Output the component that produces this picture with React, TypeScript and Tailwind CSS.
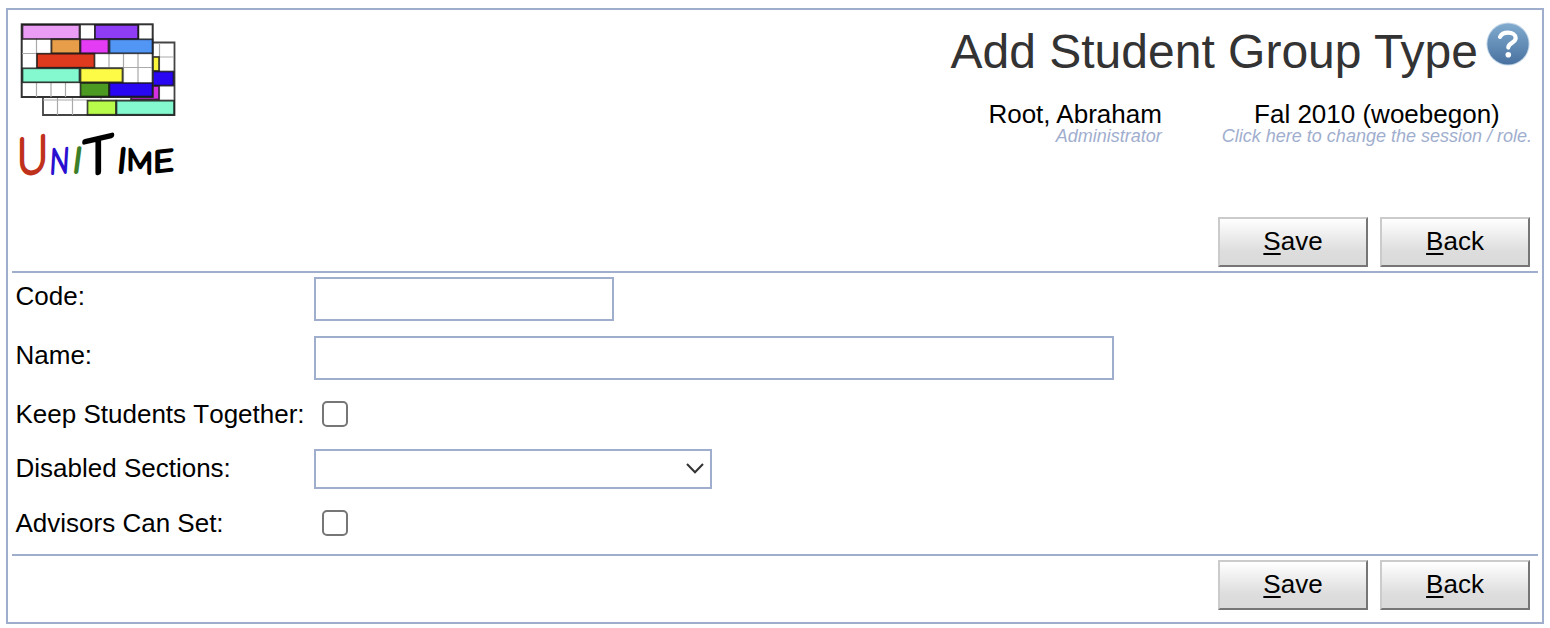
import React from 'react';

type Block = [x: number, y: number, w: number, h: number, fill: string];

const backBlocks: Block[] = [
  [152.5, 57, 6.5, 14, '#fbf53c'],
  [152.5, 71.5, 21, 14, '#2a07f2'],
  [131, 86, 28, 13.5, '#d42fe0'],
  [87.5, 100.7, 28.5, 14, '#b9fb4b'],
  [116.5, 100.7, 57.5, 14, '#84f8cf'],
];

const frontBlocks: Block[] = [
  [22.5, 25, 57, 14, '#eb9df5'],
  [95, 25, 43, 14, '#8f3df5'],
  [51.5, 39.3, 28.5, 14, '#e89e48'],
  [80.5, 39.3, 28, 14, '#e43bf5'],
  [109.5, 39.3, 43, 14, '#5195f5'],
  [37, 53.7, 57.5, 14, '#e03a1e'],
  [22.5, 68.3, 57, 14, '#84f8cf'],
  [80.5, 68.3, 42, 14, '#fdfb46'],
  [80.5, 83, 28.5, 13.5, '#4c9a22'],
  [109.5, 83, 43, 13.5, '#2a07f2'],
];

const letters = [
  { c: 'U', t: 'matrix(0.85 -0.13 0 1 17.2 175)', fill: '#c0311c', size: 50, w: 4.4 },
  { c: 'N', t: 'matrix(0.74 -0.06 -0.06 1 49.5 173.5)', fill: '#2a0fd0', size: 34, w: 3.6 },
  { c: 'I', t: 'matrix(1 0 -0.13 1 72 172)', fill: '#3d7f28', size: 34, w: 3.8 },
  { c: 'T', t: 'matrix(1.02 -0.24 0 1 84 176)', fill: '#000', size: 49, w: 5 },
  { c: 'I', t: 'matrix(1 0 -0.1 1 117 172)', fill: '#000', size: 33, w: 4.2 },
  { c: 'M', t: 'matrix(0.9 0.17 0 0.9 127 169)', fill: '#000', size: 32, w: 4 },
  { c: 'E', t: 'matrix(1.13 -0.13 0 0.95 153.5 172)', fill: '#000', size: 30, w: 3.8 },
];

function Blocks({ items }: { items: Block[] }) {
  return (
    <g stroke="#151515" strokeOpacity="0.8" strokeWidth="1.7">
      {items.map(([x, y, w, h, fill], i) => (
        <rect key={i} x={x} y={y} width={w} height={h} fill={fill} />
      ))}
    </g>
  );
}

function Logo() {
  return (
    <svg className="block h-[190px] w-[170px] shrink-0 overflow-visible" viewBox="12 10 170 190">
      <path d="M152 42.5H174.5V115H43V96H152Z" fill="#fff" stroke="#444" strokeWidth="1.8" />
      <path d="M159.5 43V100M152 57H174M152 86H174M43 100H174M57.5 97V115M72.5 97V115M101 97V101" fill="none" stroke="#aaa" strokeWidth="1.2" />
      <Blocks items={backBlocks} />
      <rect x="21.7" y="24.3" width="131" height="72.7" fill="#fff" stroke="#333" strokeWidth="2" />
      <path
        d="M36.5 39V54M51 39V54M36.5 54V68M22 53.5H51M109 54V68M123.5 54V83M138 54V83M95 67.5H152M36.5 83V97M51 83V97M65.5 83V97M22 82.5H80"
        fill="none"
        stroke="#aaa"
        strokeWidth="1.2"
      />
      <path d="M80 25V39M95 25V39M138.5 25V39" stroke="#333" strokeWidth="1.5" />
      <Blocks items={frontBlocks} />
      <g fontFamily="Lato, sans-serif" fontWeight="100" strokeLinejoin="round">
        {letters.map((l, i) => (
          <text key={i} transform={l.t} fontSize={l.size} fill={l.fill} stroke={l.fill} strokeWidth={l.w}>
            {l.c}
          </text>
        ))}
      </g>
    </svg>
  );
}

function HelpIcon() {
  return (
    <svg className="block size-[44px]" viewBox="0 0 44 44">
      <defs>
        <linearGradient id="help" x1="0" y1="0" x2="0" y2="1">
          <stop offset="0" stopColor="#82abcf" />
          <stop offset="1" stopColor="#4871a0" />
        </linearGradient>
      </defs>
      <circle cx="22" cy="22" r="21.6" fill="#c4d6e7" />
      <circle cx="22" cy="22" r="20.6" fill="url(#help)" />
      <path d="M14 14.8C15.5 11.7 18.5 10.6 22 10.6C26.5 10.6 29.7 12.8 29.7 16C29.7 21 22.3 20.7 22.3 25.6" fill="none" stroke="#fff" strokeWidth="4.2" strokeLinecap="round" />
      <circle cx="22.3" cy="32.8" r="2.8" fill="#fff" />
    </svg>
  );
}

function Button({ label }: { label: string }) {
  return (
    <button className="h-[50px] w-[150px] border-2 border-t-[#cbcbcb] border-r-[#767676] border-b-[#767676] border-l-[#cbcbcb] bg-linear-to-b from-white via-[#dddddd] via-70% to-[#dadada] pb-0.5 text-center text-[26px] leading-[30px]">
      <span className="underline decoration-2 underline-offset-[3px]">{label[0]}</span>
      {label.slice(1)}
    </button>
  );
}

function Buttons() {
  return (
    <div className="flex justify-end gap-3 pr-2">
      <Button label="Save" />
      <Button label="Back" />
    </div>
  );
}

function Row({ label, height, children }: { label: string; height: string; children: React.ReactNode }) {
  return (
    <label className={`flex items-start pl-1 ${height}`}>
      <span className="-ml-[0.5px] w-[298.5px] shrink-0 pt-2 leading-[30px] whitespace-nowrap [font-kerning:none]">{label}</span>
      {children}
    </label>
  );
}

function Checkbox() {
  return <input type="checkbox" className="mt-2.5 ml-2 size-[26px] appearance-none rounded-[5px] border-2 border-[#767676] bg-white" />;
}

export default function App() {
  return (
    <div className="h-[628px] w-[1550px] bg-white pt-2 pl-1.5 font-['Liberation_Sans',Arial,sans-serif] text-[26px] text-black">
      <div className="h-[616px] w-[1538px] border-2 border-[#a0aece] px-1">
        <header className="flex h-[207px] justify-between">
          <Logo />
          <div className="flex flex-col items-end">
            <div className="flex items-start gap-2 pt-3 pr-2">
              <h1 className="pt-[3px] text-[48px] leading-[54px] whitespace-nowrap text-[#333333]">Add Student Group Type</h1>
              <HelpIcon />
            </div>
            <div className="flex gap-[60px] pt-[20px] pr-1.5 whitespace-nowrap">
              <div className="text-right leading-[30px]">
                <div>Root, Abraham</div>
                <div className="-mt-[3px] text-[18px] leading-5 text-[#a0aece] italic">Administrator</div>
              </div>
              <div className="text-center leading-[30px]">
                <div>Fal 2010 (woebegon)</div>
                <div className="-mt-[3px] text-[18px] leading-5 text-[#a0aece] italic">Click here to change the session / role.</div>
              </div>
            </div>
          </div>
        </header>
        <Buttons />
        <main className="mt-1 border-y-2 border-[#a0aece]">
          <Row label="Code:" height="h-[59px]">
            <input type="text" className="mt-1 h-11 w-[300px] border-2 border-[#a0aece]" />
          </Row>
          <Row label="Name:" height="h-[59px]">
            <input type="text" className="mt-1 h-11 w-[800px] border-2 border-[#a0aece]" />
          </Row>
          <Row label="Keep Students Together:" height="h-[54px]">
            <Checkbox />
          </Row>
          <Row label="Disabled Sections:" height="h-[55px]">
            <div className="relative mt-1">
              <select className="block h-10 w-[398px] appearance-none border-2 border-[#a0aece] bg-white">
                <option></option>
              </select>
              <svg className="pointer-events-none absolute top-[13px] right-2 h-3 w-[18px]" viewBox="0 0 18 12">
                <path d="M1 2L9 10.3L17 2" fill="none" stroke="#333" strokeWidth="2" />
              </svg>
            </div>
          </Row>
          <Row label="Advisors Can Set:" height="h-[54px]">
            <Checkbox />
          </Row>
        </main>
        <div className="pt-1">
          <Buttons />
        </div>
      </div>
    </div>
  );
}
